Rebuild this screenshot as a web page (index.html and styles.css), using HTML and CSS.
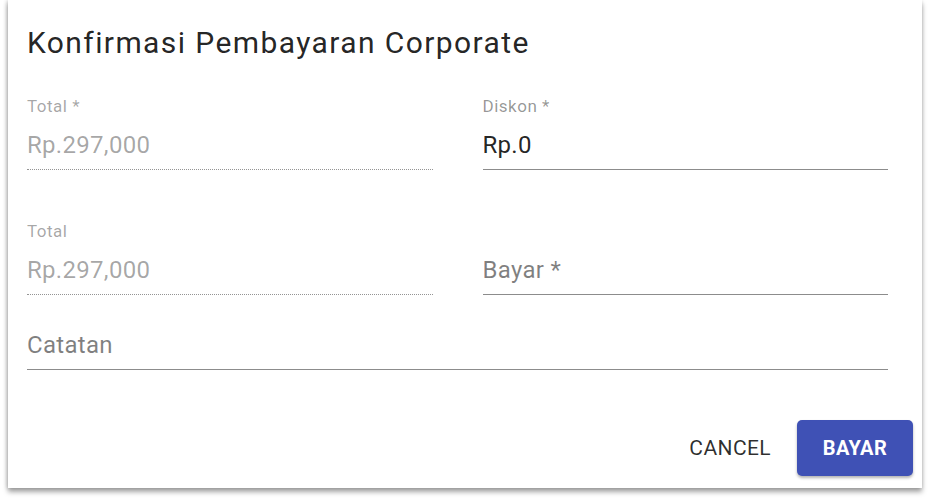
FILE: index.html
```html
<!DOCTYPE html>
<html lang="id">
<head>
<meta charset="utf-8">
<title>Konfirmasi Pembayaran Corporate</title>
<link rel="stylesheet" href="styles.css">
</head>
<body>
<div class="dialog">
  <h2 class="title">Konfirmasi Pembayaran Corporate</h2>
  <div class="grid">
    <div class="field disabled">
      <label class="label">Total *</label>
      <div class="input">Rp.297,000</div>
    </div>
    <div class="field">
      <label class="label">Diskon *</label>
      <div class="input value">Rp.0</div>
    </div>
    <div class="field disabled">
      <label class="label">Total</label>
      <div class="input">Rp.297,000</div>
    </div>
    <div class="field">
      <label class="label"></label>
      <div class="input placeholder">Bayar *</div>
    </div>
  </div>
  <div class="field notes">
    <div class="input placeholder">Catatan</div>
  </div>
  <div class="actions">
    <button class="btn btn-text">CANCEL</button>
    <button class="btn btn-primary">BAYAR</button>
  </div>
</div>
</body>
</html>
```
FILE: styles.css
```css
html, body {
  margin: 0;
  padding: 0;
  background: #ffffff;
}
body {
  font-family: Roboto, "Liberation Sans", Arial, sans-serif;
  width: 932px;
  height: 504px;
  overflow: hidden;
}
.dialog {
  box-sizing: border-box;
  margin-left: 8px;
  width: 914px;
  height: 488px;
  background: #fff;
  padding: 25px 34px 0 19px;
  box-shadow: 0 4px 5px rgba(0,0,0,0.35), -1px 0 4px rgba(0,0,0,0.18);
  display: flex;
  flex-direction: column;
}
.title {
  margin: 0 0 35px 0;
  font-size: 30px;
  line-height: 36px;
  font-weight: 400;
  letter-spacing: 1.4px;
  color: rgba(0,0,0,0.87);
}
.grid {
  display: grid;
  grid-template-columns: 1fr 1fr;
  column-gap: 50px;
  row-gap: 51px;
}
.field {
  display: flex;
  flex-direction: column;
}
.label {
  font-size: 17px;
  line-height: 20px;
  height: 20px;
  letter-spacing: 0.5px;
  color: rgba(0,0,0,0.42);
}
.input {
  margin-top: 15px;
  font-size: 24px;
  line-height: 28px;
  padding-bottom: 10px;
  letter-spacing: 0.3px;
  border-bottom: 1px solid rgba(0,0,0,0.45);
  color: rgba(0,0,0,0.87);
}
.disabled .label,
.disabled .input {
  color: rgba(0,0,0,0.36);
}
.disabled .input {
  border-bottom: 1px dotted rgba(0,0,0,0.42);
}
.placeholder {
  color: rgba(0,0,0,0.5);
}
.notes .input {
  margin-top: 36px;
}
.actions {
  display: flex;
  justify-content: flex-end;
  align-items: center;
  gap: 8px;
  margin-top: 50px;
  margin-right: -25px;
}
.btn {
  font-family: Roboto, "Liberation Sans", Arial, sans-serif;
  font-size: 20px;
  height: 56px;
  border: none;
  border-radius: 5px;
  cursor: pointer;
}
.btn-text {
  background: transparent;
  color: rgba(0,0,0,0.82);
  font-weight: 400;
  font-size: 21px;
  letter-spacing: 0.4px;
  padding: 0 18px;
}
.btn-primary {
  width: 116px;
  background: #3f51b5;
  color: #fff;
  font-weight: 700;
  letter-spacing: 0.4px;
  padding: 0;
  box-shadow: 0 2px 3px rgba(0,0,0,0.3);
}
```
